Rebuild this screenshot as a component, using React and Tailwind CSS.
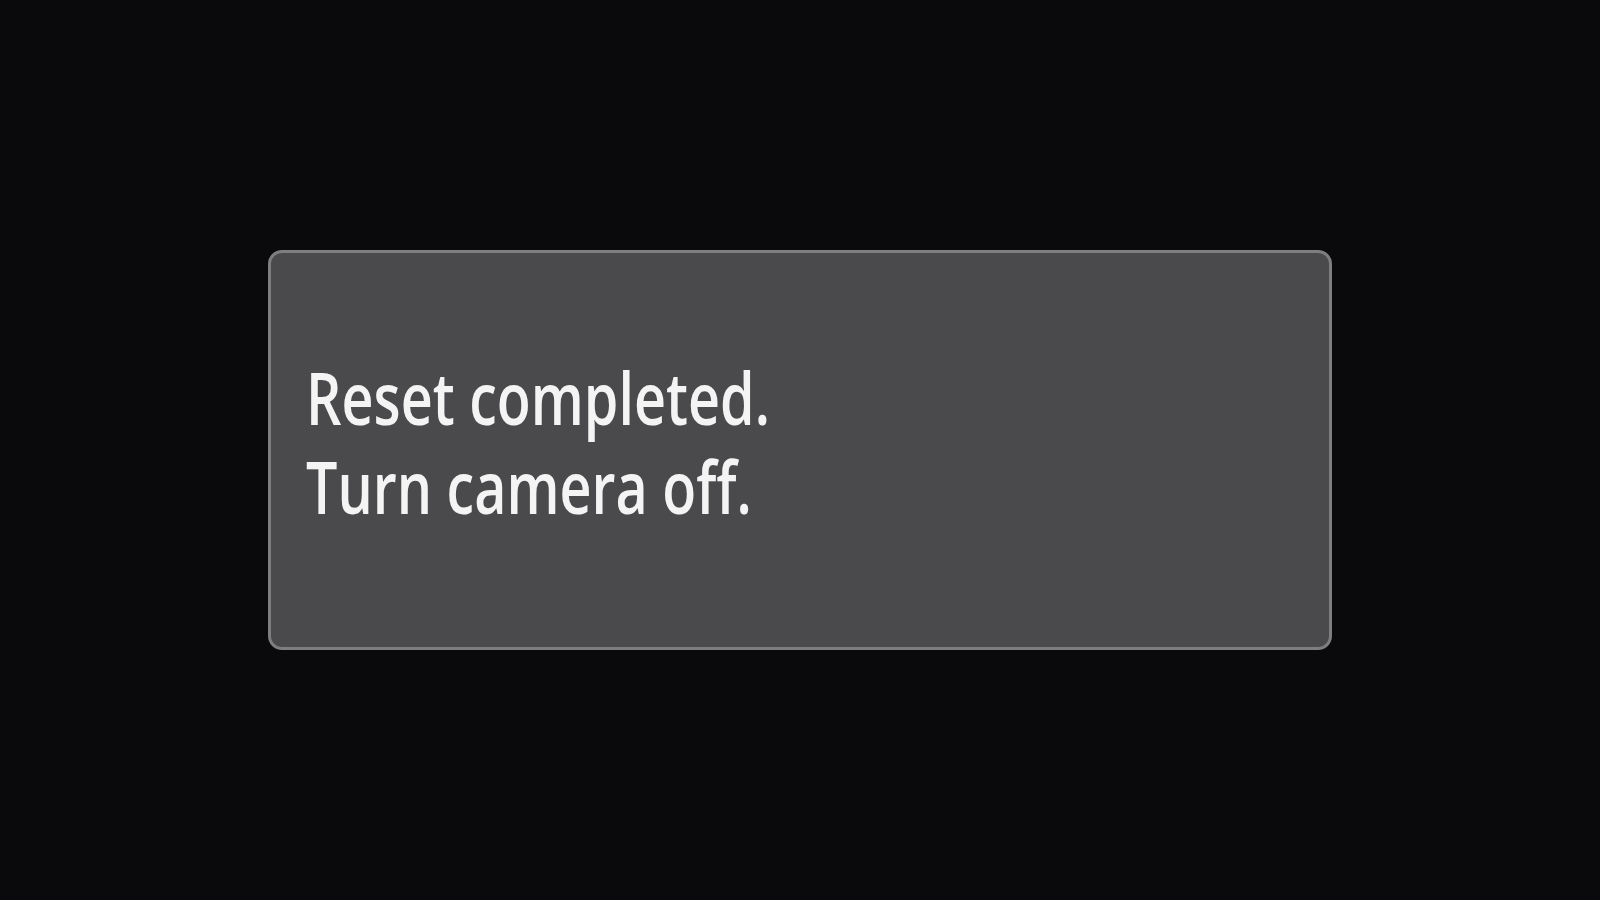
export default function App() {
  return (
    <div className="w-[1600px] h-[900px] bg-[#0a090c] flex items-center justify-center">
      <div className="w-[1064px] h-[400px] rounded-[14px] border-[3px] border-[#7e7d80] bg-[#4a494c] flex items-center pl-[35px] pb-[18px]">
        <div
          className="origin-left scale-x-[0.762] text-[#f4f4f4] text-[73px] leading-[89px] font-semibold whitespace-nowrap"
          style={{ fontFamily: '"Open Sans", "Noto Sans", sans-serif' }}
        >
          <div>Reset completed.</div>
          <div>Turn camera off.</div>
        </div>
      </div>
    </div>
  );
}
